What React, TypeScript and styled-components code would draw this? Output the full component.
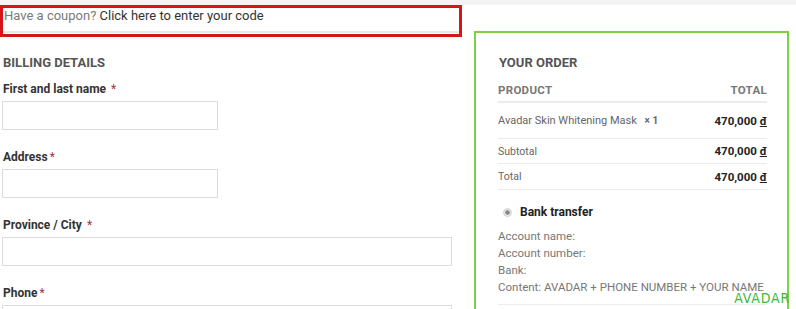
import * as React from 'react'
import styled, { createGlobalStyle } from 'styled-components'

const GlobalStyle = createGlobalStyle`
  html, body {
    margin: 0;
    padding: 0;
    background: #fff;
    font-family: Roboto, "Liberation Sans", Arial, sans-serif;
    overflow: hidden;
  }
`

const Page = styled.div`
  position: relative;
  width: 796px;
  height: 309px;
  overflow: hidden;
  border-top: 5px solid #f3f3f3;
  box-sizing: border-box;
`

const Columns = styled.div`
  display: flex;
  align-items: flex-start;
`

const LeftCol = styled.div`
  width: 462px;
  flex: none;
`

const CouponBox = styled.div`
  border: 3px solid #d3161d;
  height: 26px;
`

const CouponBar = styled.div`
  height: 23px;
  border-bottom: 2px solid #e8e8e8;
  padding-left: 1px;
  font-size: 13px;
  line-height: 15px;
  color: #7a7a7a;
`

const CouponLink = styled.span`
  color: #333;
`

const Billing = styled.div`
  padding: 18px 0 0 2px;
`

const Heading = styled.h3<{ $tight?: boolean }>`
  margin: 0 0 ${p => (p.$tight ? '9px' : '12px')} 1px;
  font-size: 13px;
  font-weight: 700;
  color: #555;
  line-height: 15px;
  text-transform: uppercase;
`

const Field = styled.div`
  margin-bottom: 20px;
`

const Label = styled.label`
  display: block;
  font-size: 12px;
  font-weight: 700;
  color: #333;
  line-height: 14px;
  margin: 0 0 5px 1px;
`

const Req = styled.span<{ $gap?: boolean }>`
  color: #a0363d;
  margin-left: ${p => (p.$gap ? '5px' : '2px')};
  font-weight: 400;
`

const Input = styled.div<{ $wide?: boolean }>`
  width: ${p => (p.$wide ? '448px' : '214px')};
  height: 27px;
  border: 1px solid #dcdcdc;
  background: #fff;
`

const RightCol = styled.div`
  flex: none;
  margin: 26px 0 0 12px;
  border: 2px solid #7fd043;
  padding: 22px 20px 30px 22px;
  width: 269px;
`

const Row = styled.div<{ $line?: number; $h: number }>`
  display: flex;
  justify-content: space-between;
  align-items: center;
  box-sizing: border-box;
  height: ${p => p.$h}px;
  border-bottom: ${p => p.$line ?? 1}px solid #ececec;
`

const HeadCell = styled.span`
  font-size: 11.5px;
  font-weight: 700;
  color: #777;
  letter-spacing: 0.3px;
`

const Cell = styled.span<{ $small?: boolean }>`
  font-size: ${p => (p.$small ? '10.5px' : '11px')};
  color: #666;
`

const Qty = styled.span`
  margin-left: 5px;
  color: #666;
  font-weight: 700;
  font-size: 10px;
`

const Amount = styled.span`
  font-size: 11.5px;
  font-weight: 700;
  color: #222;
`

const Currency = styled.span`
  text-decoration: underline;
`

const Payment = styled.div`
  padding: 15px 0 8px 0;
  border-bottom: 1px solid #ececec;
`

const Method = styled.div`
  display: flex;
  align-items: center;
  margin: 0 0 9px 5px;
  font-size: 12px;
  font-weight: 700;
  color: #222;
`

const Radio = styled.span`
  width: 7px;
  height: 7px;
  border-radius: 50%;
  border: 1px solid #ccc;
  background: radial-gradient(circle, #8a8a8a 0 2px, #eee 2.5px);
  margin-right: 8px;
`

const Detail = styled.div`
  font-size: 11.5px;
  color: #777;
  line-height: 17px;
`

const Watermark = styled.div`
  position: absolute;
  right: 6px;
  bottom: 3px;
  font-size: 14px;
  letter-spacing: 0.8px;
  color: #3cb73a;
  font-family: "DejaVu Sans Condensed", "DejaVu Sans", sans-serif;
  font-stretch: condensed;
  font-weight: 400;
`

const Price = () => (
  <Amount>
    470,000 <Currency>đ</Currency>
  </Amount>
)

export default function App() {
  return (
    <Page>
      <GlobalStyle />
      <Columns>
        <LeftCol>
          <CouponBox>
            <CouponBar>
              Have a coupon? <CouponLink>Click here to enter your code</CouponLink>
            </CouponBar>
          </CouponBox>
          <Billing>
            <Heading>Billing details</Heading>
            <Field>
              <Label>
                First and last name<Req $gap>*</Req>
              </Label>
              <Input />
            </Field>
            <Field>
              <Label>
                Address<Req>*</Req>
              </Label>
              <Input />
            </Field>
            <Field>
              <Label>
                Province / City<Req $gap>*</Req>
              </Label>
              <Input $wide />
            </Field>
            <Field>
              <Label>
                Phone<Req>*</Req>
              </Label>
              <Input $wide />
            </Field>
          </Billing>
        </LeftCol>
        <RightCol>
          <Heading $tight>Your order</Heading>
          <Row $h={24} $line={2}>
            <HeadCell>PRODUCT</HeadCell>
            <HeadCell>TOTAL</HeadCell>
          </Row>
          <Row $h={36}>
            <Cell>
              Avadar Skin Whitening Mask <Qty>× 1</Qty>
            </Cell>
            <Price />
          </Row>
          <Row $h={25}>
            <Cell $small>Subtotal</Cell>
            <Price />
          </Row>
          <Row $h={26}>
            <Cell $small>Total</Cell>
            <Price />
          </Row>
          <Payment>
            <Method>
              <Radio />
              Bank transfer
            </Method>
            <Detail>Account name:</Detail>
            <Detail>Account number:</Detail>
            <Detail>Bank:</Detail>
            <Detail>Content: AVADAR + PHONE NUMBER + YOUR NAME</Detail>
          </Payment>
        </RightCol>
      </Columns>
      <Watermark>AVADAR</Watermark>
    </Page>
  )
}
